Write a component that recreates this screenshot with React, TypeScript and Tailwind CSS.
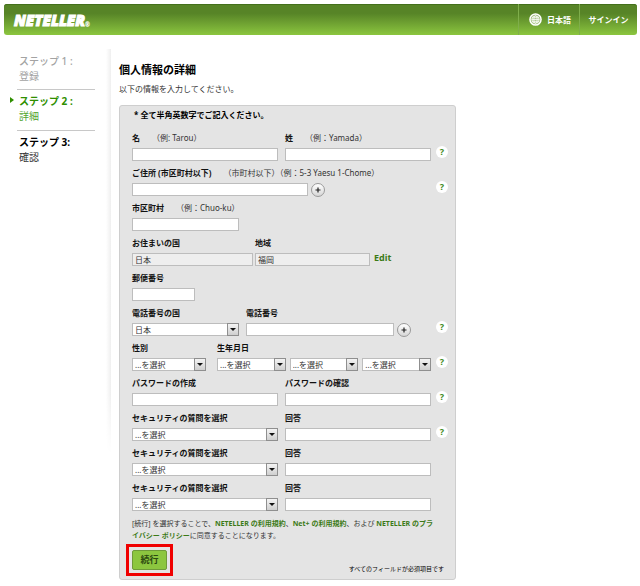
import { ReactNode } from "react";

type FieldProps = {
  id: string;
  label: string;
  hint?: string;
  className?: string;
  children: ReactNode;
};

const inputBox =
  "block h-[13px] w-full min-w-0 border border-[#bdbdbd] bg-white px-[2px] text-[8px] leading-[11px] text-[#333]";

export default function App() {
  return (
    <div
      lang="ja"
      className="min-h-screen bg-white pt-1 pb-1.5 font-['Noto_Sans','Noto_Sans_CJK_JP',sans-serif] text-[8px] leading-[12px] text-[#333]"
    >
      <Header />
      <div className="flex pt-[14px] pl-[17px]">
        <Steps />
        <div className="ml-[11px] h-[405px] w-[5px] shrink-0 bg-linear-to-r from-white to-[#efefef] mask-linear-180 mask-linear-from-white mask-linear-from-85%" />
        <main className="ml-[8px] w-full max-w-[337px] pt-[13px]">
          <h1 className="text-[11px] leading-[16px] font-bold text-black">個人情報の詳細</h1>
          <p className="mt-[4px] mb-[9px] leading-[14px]">以下の情報を入力してください。</p>
          <DetailsForm />
        </main>
      </div>
    </div>
  );
}

function Header() {
  return (
    <header className="mr-[3px] ml-1 flex h-[31px] items-stretch justify-between rounded-[3px] bg-linear-to-b from-[#578427] from-30% to-[#8cc63f] text-white shadow-[inset_0_1px_0_#44701c]">
      <a
        href="#"
        className="flex items-center pl-[10px] font-['Open_Sans',sans-serif] text-[15px] leading-[16px] font-extrabold italic [-webkit-text-stroke:1px_white]"
      >
        NETELLER
        <span className="self-end pb-[6px] text-[6px] leading-[8px] [-webkit-text-stroke:0]">®</span>
      </a>
      <nav className="flex font-bold">
        <button className="flex w-[61px] items-center gap-[5px] border-l border-[#7fae4b] pl-[10px]">
          <Globe />
          日本語
        </button>
        <a href="#" className="flex w-[58px] items-center justify-center border-l border-[#7fae4b]">
          サインイン
        </a>
      </nav>
    </header>
  );
}

function Globe() {
  return (
    <svg viewBox="0 0 14 14" className="size-[13px]" fill="none" stroke="#fff">
      <circle cx="7" cy="7" r="6" strokeWidth="1.6" fill="#ffffff66" />
      <circle cx="7" cy="7" r="3.9" strokeWidth=".8" />
      <ellipse cx="7" cy="7" rx="1.8" ry="4" strokeWidth=".8" />
      <path d="M3 7h8M3.6 5h6.8M3.6 9h6.8" strokeWidth=".8" />
    </svg>
  );
}

function Steps() {
  return (
    <ol className="w-[78px] shrink-0 pt-[5px] text-[10px] leading-[15px]">
      <li className="h-[36px] border-b border-[#c8c8c8] pl-[2px] text-[#a3a3a3]">
        <strong className="block font-medium">ステップ 1 :</strong>
        登録
      </li>
      <li className="relative h-[41px] border-b border-[#c8c8c8] pt-[4px] pl-[2px] text-[#52a52e]">
        <svg viewBox="0 0 4 6" className="absolute top-[7px] left-[-7px] h-[6px] w-[4px]">
          <path d="M0 0L4 3L0 6Z" fill="#2f8f00" />
        </svg>
        <strong className="block text-[#2f8f00]">ステップ 2 :</strong>
        詳細
      </li>
      <li className="pt-[4px] pl-[2px]">
        <strong className="block text-black">ステップ 3:</strong>
        確認
      </li>
    </ol>
  );
}

function DetailsForm() {
  return (
    <form className="rounded-[3px] border border-[#cecece] bg-[#e4e4e4] pt-[3px] pr-[7px] pb-[3px] pl-[12px]">
      <p className="mb-[9px] pl-[2px] font-bold text-black">* 全て半角英数字でご記入ください。</p>
      <div className="flex flex-col gap-[4px]">
        <Row help>
          <Field id="first-name" label="名" hint="（例: Tarou）" className="flex-1">
            <TextBox id="first-name" />
          </Field>
          <Field id="last-name" label="姓" hint="（例：Yamada）" className="ml-[7px] flex-1">
            <TextBox id="last-name" />
          </Field>
        </Row>
        <Row help>
          <Field
            id="address"
            label="ご住所 (市区町村以下)"
            hint="（市町村以下）（例：5-3 Yaesu 1-Chome）"
            className="w-[176px]"
          >
            <TextBox id="address" />
          </Field>
          <PlusButton label="住所を追加" />
        </Row>
        <Row>
          <Field id="city" label="市区町村" hint="（例：Chuo-ku）" className="w-[107px]">
            <TextBox id="city" />
          </Field>
        </Row>
        <Row>
          <Field id="country" label="お住まいの国" className="w-[121px]">
            <TextBox id="country" value="日本" />
          </Field>
          <Field id="region" label="地域" className="ml-[2px] w-[115px]">
            <TextBox id="region" value="福岡" />
          </Field>
          <a href="#" className="ml-[4px] self-end pb-[2px] text-[9px] font-bold text-[#3c7a17]">
            Edit
          </a>
        </Row>
        <Row>
          <Field id="postcode" label="郵便番号" className="w-[63px]">
            <TextBox id="postcode" />
          </Field>
        </Row>
        <Row help>
          <Field id="phone-country" label="電話番号の国" className="w-[107px]">
            <SelectBox id="phone-country" option="日本" />
          </Field>
          <Field id="phone" label="電話番号" className="ml-[7px] w-[148px]">
            <TextBox id="phone" />
          </Field>
          <PlusButton label="電話番号を追加" />
        </Row>
        <Row help>
          <Field id="gender" label="性別" className="w-[74px]">
            <SelectBox id="gender" />
          </Field>
          <Field id="birth-year" label="生年月日" className="ml-[11px] flex-1">
            <div className="flex gap-[4px]">
              <SelectBox id="birth-year" />
              <SelectBox id="birth-month" label="月" />
              <SelectBox id="birth-day" label="日" />
            </div>
          </Field>
        </Row>
        <Row help>
          <Field id="password" label="パスワードの作成" className="flex-1">
            <TextBox id="password" type="password" />
          </Field>
          <Field id="password-confirm" label="パスワードの確認" className="ml-[7px] flex-1">
            <TextBox id="password-confirm" type="password" />
          </Field>
        </Row>
        <SecurityRow n={1} help />
        <SecurityRow n={2} />
        <SecurityRow n={3} />
      </div>
      <p className="mt-[7px] pr-[10px] text-[7px] break-all">
        [続行] を選択することで、<TermsLink>NETELLER の利用規約</TermsLink>、
        <TermsLink>Net+ の利用規約</TermsLink>、および <TermsLink>NETELLER のプライバシー ポリシー</TermsLink>
        に同意することになります。
      </p>
      <div className="mt-[2px] flex items-end justify-between">
        <div className="-ml-[6px] border-3 border-[#f00000] p-[3px]">
          <button
            type="submit"
            className="block h-[20px] w-[35px] rounded-[2px] border border-[#6f9a3a] bg-[#8cc63f] text-[9px] font-bold text-[#2c4a10]"
          >
            続行
          </button>
        </div>
        <p className="pr-[4px] pb-[3px] text-[6px] leading-[8px] text-black">すべてのフィールドが必須項目です</p>
      </div>
    </form>
  );
}

function Row({ help, children }: { help?: boolean; children: ReactNode }) {
  return (
    <div className="flex items-end">
      <div className="flex min-w-0 flex-1 items-end">{children}</div>
      <div className="ml-[5px] w-[12px] shrink-0 pb-[3px]">
        {help && (
          <button
            type="button"
            aria-label="ヘルプ"
            className="block size-[12px] rounded-full bg-white text-center text-[9px] leading-[12px] font-bold text-[#3f8a1c]"
          >
            ?
          </button>
        )}
      </div>
    </div>
  );
}

function Field({ id, label, hint, className = "", children }: FieldProps) {
  return (
    <div className={`min-w-0 ${className}`}>
      <label htmlFor={id} className="mb-[2px] flex gap-[12px] leading-[16px] whitespace-nowrap">
        <span className="font-bold text-[#111]">{label}</span>
        {hint && <span>{hint}</span>}
      </label>
      {children}
    </div>
  );
}

function TextBox({ id, type = "text", value }: { id: string; type?: string; value?: string }) {
  if (value) {
    return <input id={id} value={value} readOnly className={`${inputBox} bg-[#eeeeee]!`} />;
  }
  return <input id={id} type={type} className={inputBox} />;
}

function SelectBox({ id, label, option = "...を選択" }: { id: string; label?: string; option?: string }) {
  return (
    <div className="relative min-w-0 flex-1">
      <select id={id} aria-label={label} className={`${inputBox} appearance-none`}>
        <option>{option}</option>
      </select>
      <span className="pointer-events-none absolute top-0 right-0 flex h-[13px] w-[12px] items-center justify-center border border-[#8f8f8f] bg-linear-to-b from-[#f4f4f4] to-[#cfcfcf]">
        <svg viewBox="0 0 6 3" className="h-[3px] w-[6px]">
          <path d="M0 0H6L3 3Z" fill="#111" />
        </svg>
      </span>
    </div>
  );
}

function PlusButton({ label }: { label: string }) {
  return (
    <button
      type="button"
      aria-label={label}
      className="-mb-[1px] ml-[3px] flex size-[14px] shrink-0 items-center justify-center rounded-full border border-[#9a9a9a] bg-linear-to-b from-white to-[#d6d6d6]"
    >
      <svg viewBox="0 0 6 6" className="size-[6px]">
        <path d="M3 .5V5.5M.5 3H5.5" stroke="#222" strokeWidth="1.2" />
      </svg>
    </button>
  );
}

function SecurityRow({ n, help }: { n: number; help?: boolean }) {
  return (
    <Row help={help}>
      <Field id={`question-${n}`} label="セキュリティの質問を選択" className="flex-1">
        <SelectBox id={`question-${n}`} />
      </Field>
      <Field id={`answer-${n}`} label="回答" className="ml-[7px] flex-1">
        <TextBox id={`answer-${n}`} />
      </Field>
    </Row>
  );
}

function TermsLink({ children }: { children: ReactNode }) {
  return (
    <a href="#" className="font-bold text-[#3c7a17]">
      {children}
    </a>
  );
}
